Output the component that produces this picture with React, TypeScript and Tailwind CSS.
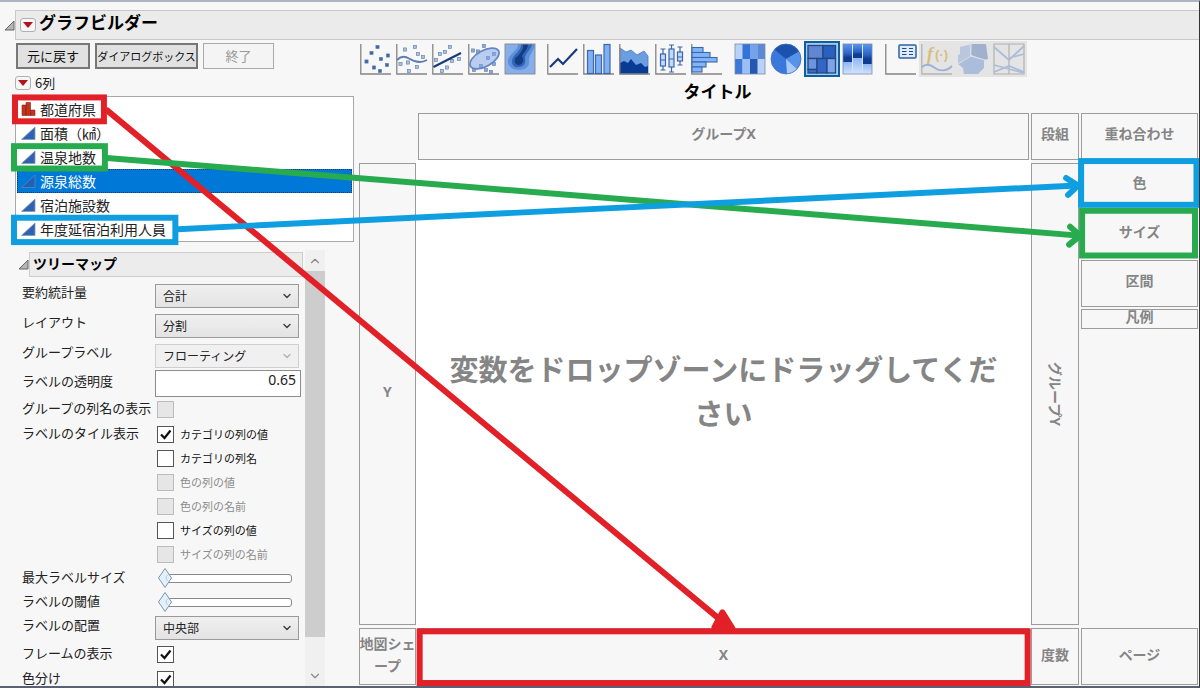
import React from 'react';
import { ChevronDown, ChevronUp } from 'lucide-react';
import clsx from 'clsx';

type IconName =
    | 'points' | 'smoother' | 'fit' | 'ellipse' | 'contour'
    | 'line' | 'bar' | 'area' | 'box' | 'histogram'
    | 'heatmap' | 'pie' | 'treemap' | 'mosaic'
    | 'caption' | 'formula' | 'map' | 'parallel';

const toolGroups: { name: IconName; label: string }[][] = [
    [
        { name: 'points', label: '点' },
        { name: 'smoother', label: '平滑線' },
        { name: 'fit', label: '回帰直線' },
        { name: 'ellipse', label: '楕円' },
        { name: 'contour', label: '等高線' },
    ],
    [
        { name: 'line', label: '折れ線' },
        { name: 'bar', label: '棒' },
        { name: 'area', label: '面' },
        { name: 'box', label: '箱ひげ図' },
        { name: 'histogram', label: 'ヒストグラム' },
    ],
    [
        { name: 'heatmap', label: 'ヒートマップ' },
        { name: 'pie', label: '円' },
        { name: 'treemap', label: 'ツリーマップ' },
        { name: 'mosaic', label: 'モザイク' },
    ],
    [
        { name: 'caption', label: 'キャプション' },
        { name: 'formula', label: '計算式' },
        { name: 'map', label: '地図シェープ' },
        { name: 'parallel', label: 'パラレル' },
    ],
];

const disabledTools: IconName[] = ['formula', 'map', 'parallel'];

const columns = [
    { name: '都道府県', nominal: true },
    { name: '面積（㎢）' },
    { name: '温泉地数' },
    { name: '源泉総数', selected: true },
    { name: '宿泊施設数' },
    { name: '年度延宿泊利用人員' },
];

const tileOptions = [
    { label: 'カテゴリの列の値', checked: true },
    { label: 'カテゴリの列名' },
    { label: '色の列の値', disabled: true },
    { label: '色の列の名前', disabled: true },
    { label: 'サイズの列の値' },
    { label: 'サイズの列の名前', disabled: true },
];

function Dots({ at, fill }: { at: [number, number][]; fill: string }) {
    return (
        <g fill={fill} stroke="#5f7fae" strokeWidth="0.6">
            {at.map(([x, y]) => (
                <rect key={`${x}-${y}`} x={x - 1.6} y={y - 1.6} width="3.2" height="3.2" />
            ))}
        </g>
    );
}

const axes = <path d="M0.8 1V31H31" fill="none" stroke="#858585" strokeWidth="1.3" />;

const drawings: Record<IconName, React.ReactNode> = {
    points: (
        <>
            {axes}
            <Dots fill="#3f66a8" at={[[17.5, 4], [11.5, 10], [28, 12.5], [21, 16], [6.5, 18.5], [27, 22], [14, 24.5], [20, 28]]} />
        </>
    ),
    smoother: (
        <>
            {axes}
            <Dots fill="#a9bfe3" at={[[9, 6.5], [19, 4], [22, 11], [27, 14], [4.5, 21], [12, 19.5], [21, 24], [13, 28]]} />
            <path d="M1 17C5 13 9 13 13 15.5S24 21 31 17" fill="none" stroke="#5c7db0" strokeWidth="1.8" />
        </>
    ),
    fit: (
        <>
            {axes}
            <Dots fill="#a9bfe3" at={[[18, 4], [8, 11], [13, 9], [4, 17], [20, 18], [27, 16], [15, 24.5], [10, 28]]} />
            <path d="M1.5 24L29 10" fill="none" stroke="#1b3a7d" strokeWidth="2.2" />
        </>
    ),
    ellipse: (
        <>
            {axes}
            <Dots fill="#8ea9d8" at={[[5, 7.5], [10, 8.5], [16, 3], [26, 11], [20, 15], [13, 23], [26, 21], [18, 27], [6, 27], [23, 29]]} />
            <ellipse cx="16.5" cy="15.5" rx="16" ry="8" transform="rotate(-29 16.5 15.5)" fill="#7ea2ea" fillOpacity="0.5" stroke="#6486c6" strokeWidth="1.7" />
        </>
    ),
    contour: (
        <>
            <rect x="1" y="1" width="30" height="30" fill="#86aee8" />
            <path d="M14 1C15 7 4 11 4 18C4 24 9 27 15 27C22 27 26 23 25 17C25 11 31 7 31 1Z" fill="#5f8fd9" />
            <path d="M17 1C18 8 8 12 8 18C8 23 11 25 15 24C20 24 22 20 21 15C21 10 28 6 28 1Z" fill="#3064b4" />
            <path d="M19 1C20 6 17 9 14 13C9 15 10 22 15 22C20 21 20 16 18 13C20 9 24 6 24 1Z" fill="#123d82" />
            <rect x="1" y="1" width="30" height="30" fill="none" stroke="#8a8f98" />
        </>
    ),
    line: (
        <>
            {axes}
            <path d="M3 24L11 16L16 21L30 6" fill="none" stroke="#1b3a7d" strokeWidth="2.2" />
        </>
    ),
    bar: (
        <>
            {axes}
            <g fill="#7fb0f5" stroke="#3c66ae" strokeWidth="1.2">
                <rect x="4.5" y="7.5" width="6" height="23" />
                <rect x="12.5" y="12" width="6" height="18.5" />
                <rect x="21" y="1.5" width="6" height="29" />
            </g>
        </>
    ),
    area: (
        <>
            <path d="M1 5L7 9L12 7L18 12L25 8L29 13V31H1Z" fill="#6a9ee0" stroke="#4d7cc0" strokeWidth="0.8" />
            <path d="M1 20L5 18L9 20L12 16L17 22L22 20L26 24L29 23V31H1Z" fill="#0a3b94" />
            {axes}
        </>
    ),
    box: (
        <>
            {axes}
            <g fill="#c4dafc" stroke="#3c66ae" strokeWidth="1.2">
                <path d="M8 6V27M5.5 6H10.5M5.5 27H10.5M16.5 2V29M14 2H19M14 29H19M25 4V22M22.5 4H27.5M22.5 22H27.5" />
                <rect x="5.5" y="11" width="5" height="12" />
                <rect x="14" y="6" width="5" height="18" />
                <rect x="22.5" y="9" width="5" height="9" />
                <path d="M5.5 17H10.5M14 16H19M22.5 14H27.5" />
            </g>
        </>
    ),
    histogram: (
        <>
            {axes}
            <g fill="#82b4fa" stroke="#3c66ae" strokeWidth="1.1">
                <rect x="1" y="4.5" width="11" height="5" />
                <rect x="1" y="9.5" width="18" height="5" />
                <rect x="1" y="14.5" width="25" height="4.5" />
                <rect x="1" y="19" width="14" height="5" />
                <rect x="1" y="24" width="10" height="5" />
            </g>
        </>
    ),
    heatmap: (
        <>
            <rect x="1" y="1" width="30" height="30" fill="#b9d2fb" />
            <rect x="8.5" y="1" width="7.5" height="15" fill="#3474d8" />
            <rect x="16" y="1" width="7.5" height="15" fill="#76a2ea" />
            <rect x="23.5" y="1" width="7.5" height="15" fill="#5c88d6" />
            <rect x="1" y="16" width="7.5" height="15" fill="#3c78d8" />
            <rect x="8.5" y="16" width="7.5" height="15" fill="#9cbff6" />
            <rect x="16" y="16" width="7.5" height="15" fill="#2458b0" />
            <rect x="1" y="1" width="30" height="30" fill="none" stroke="#7b8cab" strokeWidth="0.8" />
        </>
    ),
    pie: (
        <>
            <circle cx="16" cy="16" r="15" fill="#3a78dc" />
            <path d="M16 16L4.5 6.5A15 15 0 0 1 29 8.5Z" fill="#1b52ae" />
            <path d="M16 16L29 8.5A15 15 0 0 1 27 26Z" fill="#5594ea" />
            <path d="M16 16L27 26A15 15 0 0 1 17 31Z" fill="#a9cbfb" />
            <circle cx="16" cy="16" r="15" fill="none" stroke="#4b74b4" strokeWidth="0.8" />
        </>
    ),
    treemap: (
        <g stroke="#24477f" strokeWidth="1.3">
            <rect x="2" y="2.5" width="15" height="13" fill="#6187d2" />
            <rect x="17" y="2.5" width="12.5" height="13" fill="#2a60c0" />
            <rect x="2" y="15.5" width="9" height="11" fill="#6c95de" />
            <rect x="2" y="26.5" width="9" height="3.5" fill="#3a6cc8" />
            <rect x="11" y="15.5" width="10" height="14.5" fill="#3266c4" />
            <rect x="21" y="15.5" width="8.5" height="14.5" fill="#7da4e8" />
        </g>
    ),
    mosaic: (
        <>
            <defs>
                <linearGradient id="mosaic-top" x1="0" y1="0" x2="0" y2="1">
                    <stop offset="0" stopColor="#5a96ee" />
                    <stop offset="0.55" stopColor="#2a62c4" />
                    <stop offset="0.75" stopColor="#0f3c90" />
                    <stop offset="1" stopColor="#0f3c90" />
                </linearGradient>
                <linearGradient id="mosaic-bottom" x1="0" y1="0" x2="0" y2="1">
                    <stop offset="0" stopColor="#8fb6f4" />
                    <stop offset="1" stopColor="#d3e3fd" />
                </linearGradient>
            </defs>
            <g fill="url(#mosaic-bottom)">
                <rect x="1" y="19" width="9" height="12" />
                <rect x="11" y="15" width="9" height="16" />
                <rect x="21" y="21" width="9" height="10" />
            </g>
            <g fill="url(#mosaic-top)">
                <rect x="1" y="1" width="9" height="18" />
                <rect x="11" y="1" width="9" height="14" />
                <rect x="21" y="1" width="9" height="20" />
            </g>
            <path d="M10.5 1V31M20.5 1V31" stroke="#d7e3f7" />
            <rect x="1" y="1" width="29" height="30" fill="none" stroke="#7b8cab" strokeWidth="0.8" />
        </>
    ),
    caption: (
        <>
            {axes}
            <rect x="14" y="2" width="17" height="13" rx="1" fill="#dcebff" stroke="#2f62a5" strokeWidth="1.5" />
            <path d="M17 5.5H21.5M24 5.5H28M17 8.5H21.5M24 8.5H28M17 11.5H21.5M24 11.5H28" stroke="#24497f" strokeWidth="1.2" />
        </>
    ),
    formula: (
        <>
            {axes}
            <text x="6" y="17" fontFamily="Liberation Serif, serif" fontSize="18" fontWeight="700" fontStyle="italic" fill="#c99a1c">f</text>
            <text x="14" y="16" fontFamily="Liberation Sans, sans-serif" fontSize="13" fontWeight="700" fill="#c99a1c">(·)</text>
            <path d="M1 24C5 20 10 22 14 25S25 29 31 23" fill="none" stroke="#5a82c2" strokeWidth="1.9" />
        </>
    ),
    map: (
        <>
            <path d="M3 4L15 1L13 14L1 21V12L3 11Z" fill="#8fabd9" />
            <path d="M15 1H29L31 16L27 17L14 12Z" fill="#5f7fb8" />
            <path d="M1 21L13 13L27 17V25L21 31H7L6 25Z" fill="#7299d4" />
            <path d="M13 1L14 13L1 21M14 13L28 17" fill="none" stroke="#d6dbe3" />
        </>
    ),
    parallel: (
        <>
            <path d="M1 1V31H31V1ZM16 1V31" fill="none" stroke="#808080" strokeWidth="1.2" />
            <path d="M1 4L16 17L31 3M16 15L31 11M1 29L16 23L31 29M1 22L16 26L31 30" fill="none" stroke="#7397d0" strokeWidth="1.8" />
        </>
    ),
};

function ToolButton({ name, label }: { name: IconName; label: string }) {
    const disabled = disabledTools.includes(name);
    return (
        <button
            type="button"
            aria-label={label}
            disabled={disabled}
            className={clsx(
                'flex h-9 w-9 items-center justify-center',
                name === 'treemap' && 'border-2 border-[#0d5f9f] bg-[#9fcbf0]',
                disabled && 'bg-[#e4e4e4]',
            )}
        >
            <svg viewBox="0 0 32 32" className={clsx('h-8 w-8 shrink-0', disabled && 'opacity-50')} aria-hidden="true">
                {drawings[name]}
            </svg>
        </button>
    );
}

// Little grey triangle that opens and closes an outline
function Disclosure() {
    return (
        <svg viewBox="0 0 11 11" className="h-[11px] w-[11px] shrink-0" aria-hidden="true">
            <path d="M10 1V10H1Z" fill="#b5b5b5" stroke="#666" />
        </svg>
    );
}

function RedMenu({ label }: { label: string }) {
    return (
        <button type="button" aria-label={label} className="flex h-[14px] w-4 shrink-0 items-center justify-center rounded-[3px] border border-[#b0b0b0] bg-[#f6f6f6]">
            <svg viewBox="0 0 10 6" className="h-[6px] w-[10px]" aria-hidden="true">
                <path d="M0 0H10L5 6Z" fill="#b5121b" />
            </svg>
        </button>
    );
}

function ColumnIcon({ nominal, selected }: { nominal?: boolean; selected?: boolean }) {
    if (nominal) {
        return (
            <svg viewBox="0 0 15 14" className="h-[14px] w-[15px] shrink-0" aria-hidden="true">
                <path d="M1 3H5V13.5H1ZM5 0.5H9.5V13.5H5ZM9.5 8H14V13.5H9.5Z" fill="#c4321c" stroke="#8c2517" strokeWidth="0.6" />
            </svg>
        );
    }
    return (
        <svg viewBox="0 0 15 14" className="h-[14px] w-[15px] shrink-0" aria-hidden="true">
            <path d="M14 1V13.5H0.5Z" fill={selected ? '#1d62b8' : '#2d62b4'} stroke={selected ? '#5d86b8' : '#8a98ac'} strokeWidth="0.8" />
        </svg>
    );
}

function FormRow({ label, id, className, children }: { label: string; id?: string; className: string; children: React.ReactNode }) {
    return (
        <div className={clsx('flex shrink-0', className)}>
            <label htmlFor={id} className="w-[133px] shrink-0 text-[13px] leading-[22px] whitespace-nowrap text-[#222]">
                {label}
            </label>
            <div className="flex flex-1 items-center">{children}</div>
        </div>
    );
}

function Dropdown({ id, value, disabled }: { id: string; value: string; disabled?: boolean }) {
    return (
        <div className="relative w-[144px]">
            <select
                id={id}
                disabled={disabled}
                defaultValue={value}
                className="block h-6 w-full appearance-none border border-[#9a9a9a] bg-linear-to-b from-[#f0f0f0] to-[#e3e3e3] px-[7px] text-xs text-[#222] disabled:border-[#cfcfcf] disabled:from-[#f0f0f0] disabled:to-[#f0f0f0] disabled:opacity-100"
            >
                <option>{value}</option>
            </select>
            <ChevronDown strokeWidth={3} className={clsx('pointer-events-none absolute top-1.5 right-1.5 h-3 w-3', disabled ? 'text-[#b5b5b5]' : 'text-[#444]')} />
        </div>
    );
}

function Checkbox({ id, checked, disabled }: { id: string; checked?: boolean; disabled?: boolean }) {
    return (
        <span className="relative ml-0.5 h-[17px] w-[17px] shrink-0">
            <input
                id={id}
                type="checkbox"
                defaultChecked={checked}
                disabled={disabled}
                className="peer block h-[17px] w-[17px] appearance-none border border-[#555] bg-white disabled:border-[#bcbcbc] disabled:bg-[#e6e6e6]"
            />
            <svg viewBox="0 0 17 17" className="pointer-events-none absolute inset-0 hidden h-[17px] w-[17px] peer-checked:block" aria-hidden="true">
                <path d="M4 8.5L7.5 12L13.5 4.5" fill="none" stroke="#111" strokeWidth="2.2" />
            </svg>
        </span>
    );
}

function Slider({ id }: { id: string }) {
    const [value, setValue] = React.useState(0);
    return (
        <div className="relative ml-[3px] flex h-5 w-[134px] items-center">
            <input
                id={id}
                type="range"
                min={0}
                max={100}
                value={value}
                onChange={(e) => setValue(Number(e.target.value))}
                className="ml-[7px] h-[9px] w-full appearance-none rounded-[3px] border border-[#8a8a8a] bg-white [&::-webkit-slider-thumb]:opacity-0"
            />
            <svg
                viewBox="0 0 14 20"
                className="pointer-events-none absolute top-0 h-5 w-[14px]"
                style={{ left: `${value * 0.9}%` }}
                aria-hidden="true"
            >
                <path d="M7 0.5L13.5 10L7 19.5L0.5 10Z" fill="#e2f1fb" stroke="#7d97ab" />
                <path d="M9.5 7A4 4 0 0 0 9.5 13" fill="none" stroke="#a9cde6" />
            </svg>
        </div>
    );
}

function Zone({ children, className }: { children?: React.ReactNode; className?: string }) {
    return (
        <div
            className={clsx(
                "flex items-center justify-center border border-[#9c9c9c] bg-[#f7f7f7] text-center font-['Noto_Sans','Noto_Sans_CJK_JP',sans-serif] text-sm leading-[22px] font-bold text-[#858585]",
                className ?? 'pb-1.5',
            )}
        >
            {children}
        </div>
    );
}

// Coloured frames and arrows that lead each column to its drop zone
function Annotations() {
    return (
        <svg viewBox="0 0 1200 688" preserveAspectRatio="none" className="pointer-events-none absolute inset-0 h-full w-full" aria-hidden="true">
            <g fill="none" stroke="#e12028" strokeWidth="6">
                <rect x="15" y="96" width="89" height="24" />
                <rect x="420" y="633" width="608.5" height="52" />
                <path d="M106 108L730 629" />
                <path d="M723 614L733 630L715 629Z" fill="#e81c24" strokeLinejoin="round" strokeLinecap="round" />
            </g>
            <g fill="none" stroke="#27ab4e" strokeWidth="6">
                <rect x="14" y="145" width="91" height="22.5" />
                <rect x="1083" y="210" width="113" height="45" />
                <path d="M107 157L1080 235" />
                <path d="M1071 226L1081 235L1070 244" strokeLinecap="round" strokeLinejoin="round" />
            </g>
            <g fill="none" stroke="#0f9fe0" strokeWidth="6">
                <rect x="14" y="217" width="161.5" height="24.5" />
                <rect x="1082" y="160" width="115.5" height="44" />
                <path d="M178 228.5L1078 184.5" />
                <path d="M1067 177L1079 184.5L1069 194" strokeLinecap="round" strokeLinejoin="round" />
            </g>
        </svg>
    );
}

function ColumnPanel() {
    return (
        <>
            <div className="flex gap-[5px] pt-0.5 pl-px">
                <button type="button" className="h-[26px] w-[74px] border-2 border-[#777] bg-[#e1e1e1] text-[13px] leading-5 text-[#111]">
                    元に戻す
                </button>
                <button type="button" className="h-[26px] w-[103px] border-2 border-[#777] bg-[#e1e1e1] text-[11px] leading-5 whitespace-nowrap text-[#111]">
                    ダイアログボックス
                </button>
                <button type="button" disabled className="h-[26px] w-[71px] border border-[#aaa] bg-[#f4f4f4] text-[13px] leading-5 text-[#999]">
                    終了
                </button>
            </div>
            <div className="mt-1 flex h-5 items-center gap-1 text-[13px] text-[#222]">
                <RedMenu label="列のメニュー" />
                <span>6列</span>
            </div>
            <ul role="listbox" aria-label="6列" className="mt-[3px] border border-[#a8a8a8] bg-white">
                {columns.map((c) => (
                    <li
                        key={c.name}
                        role="option"
                        aria-selected={!!c.selected}
                        className={clsx(
                            'mx-px flex h-6 items-center gap-1 pl-[3px] text-sm',
                            c.selected ? 'border border-dotted border-[#0b3f74] bg-[#0078d7] text-white' : 'border border-transparent text-[#222]',
                        )}
                    >
                        <ColumnIcon nominal={c.nominal} selected={c.selected} />
                        {c.name}
                    </li>
                ))}
            </ul>
        </>
    );
}

function TreemapPanel() {
    return (
        <div className="mt-2 flex min-h-0 flex-1">
            <div className="flex w-[290px] flex-col overflow-hidden">
                <div className="mt-0.5 flex shrink-0 items-center pl-[3px]">
                    <Disclosure />
                    <h2 className="h-[25px] flex-1 border border-[#cdcdcd] bg-[#ececec] pl-[3px] text-sm leading-5 font-bold text-black">ツリーマップ</h2>
                    <div className="w-0.5" />
                </div>
                <form className="flex flex-col pt-1 pl-[7px]">
                    <FormRow label="要約統計量" id="stat" className="h-[30px]">
                        <Dropdown id="stat" value="合計" />
                    </FormRow>
                    <FormRow label="レイアウト" id="layout" className="h-[30px]">
                        <Dropdown id="layout" value="分割" />
                    </FormRow>
                    <FormRow label="グループラベル" id="group-label" className="h-[29px]">
                        <Dropdown id="group-label" value="フローティング" disabled />
                    </FormRow>
                    <FormRow label="ラベルの透明度" id="opacity" className="h-[27px]">
                        <input
                            id="opacity"
                            type="text"
                            defaultValue="0.65"
                            className="h-[27px] w-[146px] border border-[#8c8c8c] bg-white px-1 pb-2 text-right font-['Noto_Sans',sans-serif] text-sm leading-4 text-[#222]"
                        />
                    </FormRow>
                    <FormRow label="グループの列名の表示" id="group-name" className="h-[25px]">
                        <Checkbox id="group-name" disabled />
                    </FormRow>
                    <div className="flex shrink-0">
                        <div className="w-[133px] text-[13px] leading-[22px] text-[#222]">ラベルのタイル表示</div>
                        <div>
                            {tileOptions.map((o, i) => (
                                <div key={o.label} className="flex h-6 items-center gap-1.5">
                                    <Checkbox id={`tile-${i}`} checked={o.checked} disabled={o.disabled} />
                                    <label htmlFor={`tile-${i}`} className={clsx('text-[11px]', o.disabled ? 'text-[#8c8c8c]' : 'text-[#111]')}>
                                        {o.label}
                                    </label>
                                </div>
                            ))}
                        </div>
                    </div>
                    <FormRow label="最大ラベルサイズ" id="max-size" className="h-6">
                        <Slider id="max-size" />
                    </FormRow>
                    <FormRow label="ラベルの閾値" id="threshold" className="h-6">
                        <Slider id="threshold" />
                    </FormRow>
                    <FormRow label="ラベルの配置" id="position" className="h-7">
                        <Dropdown id="position" value="中央部" />
                    </FormRow>
                    <FormRow label="フレームの表示" id="frame" className="h-[25px]">
                        <Checkbox id="frame" checked />
                    </FormRow>
                    <FormRow label="色分け" id="coloring" className="h-[25px]">
                        <Checkbox id="coloring" checked />
                    </FormRow>
                </form>
            </div>
            <div className="flex w-5 flex-col bg-[#f0f0f0] text-[#888]">
                <button type="button" aria-label="上へ" className="flex h-[21px] items-center justify-center">
                    <ChevronUp className="h-3.5 w-3.5" />
                </button>
                <div className="flex-1">
                    <div className="h-[93%] bg-[#cdcdcd]" />
                </div>
                <button type="button" aria-label="下へ" className="flex h-[21px] items-center justify-center">
                    <ChevronDown className="h-3.5 w-3.5" />
                </button>
            </div>
        </div>
    );
}

export default function App() {
    return (
        <div className="relative flex h-screen flex-col overflow-hidden border-t-2 border-r border-b-2 border-t-[#aab4c4] border-r-[#333] border-b-[#5b6072] bg-[#f7f7f7] font-['Noto_Sans_CJK_JP',sans-serif]">
            <header className="mt-2 flex shrink-0 items-center pl-1">
                <Disclosure />
                <div className="flex h-[30px] flex-1 items-center gap-[3px] border border-r-0 border-[#c8c8c8] bg-[#ebebeb] pl-1">
                    <RedMenu label="グラフビルダーのメニュー" />
                    <h1 className="pb-1.5 text-[17px] leading-[22px] font-bold text-black">グラフビルダー</h1>
                </div>
            </header>

            <div className="flex min-h-0 flex-1">
                <aside className="ml-[15px] flex w-[339px] shrink-0 flex-col pt-px">
                    <ColumnPanel />
                    <TreemapPanel />
                </aside>

                <main className="ml-1 flex min-w-0 flex-1 flex-col pt-px">
                    <div role="toolbar" aria-label="グラフの種類" className="flex gap-[7px]">
                        {toolGroups.map((group) => (
                            <div key={group[0].name} className="flex">
                                {group.map((t) => (
                                    <ToolButton key={t.name} {...t} />
                                ))}
                            </div>
                        ))}
                    </div>
                    <h2 className="mr-[122px] h-9 text-center text-[17px] leading-7 font-bold text-black">タイトル</h2>

                    <div className="mx-px mb-px grid min-h-0 flex-1 grid-cols-[57px_1fr_48px_117px] grid-rows-[47px_1fr_57px] gap-x-0.5 gap-y-[3px]">
                        <Zone className="col-start-2 pb-1.5">グループX</Zone>
                        <Zone>段組</Zone>
                        <div className="col-start-4 row-span-3 row-start-1 flex flex-col gap-0.5">
                            <Zone className="h-[47px] pb-1.5">重ね合わせ</Zone>
                            <Zone className="h-[47px] pb-1.5">色</Zone>
                            <Zone className="h-[47px] pb-1.5">サイズ</Zone>
                            <Zone className="h-[47px] pb-1.5">区間</Zone>
                            <Zone className="h-5 pb-1">凡例</Zone>
                            <Zone className="mt-auto h-[57px] pb-1">ページ</Zone>
                        </div>
                        <Zone className="col-start-1 row-start-2 pb-1">Y</Zone>
                        <div className="-mx-0.5 -my-[3px] flex items-center justify-center bg-white px-6 pb-2">
                            <p className="text-center text-[29px] leading-[44px] font-bold text-[#858585]">変数をドロップゾーンにドラッグしてください</p>
                        </div>
                        <Zone className="pb-0">
                            <span className="[text-orientation:sideways] [writing-mode:vertical-rl]">グループY</span>
                        </Zone>
                        <Zone className="col-start-1 row-start-3 pb-1 whitespace-nowrap">
                            地図シェ
                            <br />
                            ープ
                        </Zone>
                        <Zone className="pb-1">X</Zone>
                        <Zone className="pb-1">度数</Zone>
                    </div>
                </main>
            </div>

            <Annotations />
        </div>
    );
}
